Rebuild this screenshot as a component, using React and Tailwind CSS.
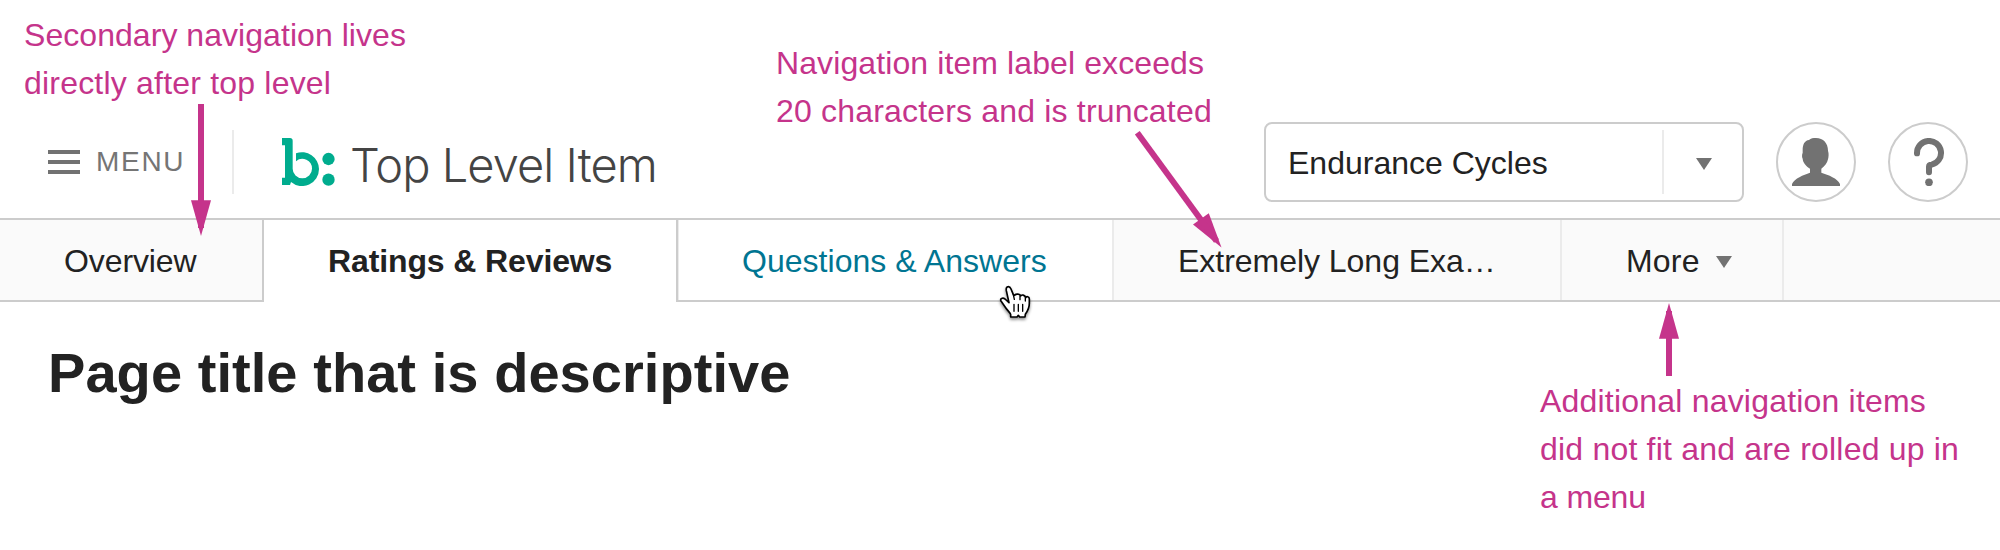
import React from "react";

function Caret() {
  return (
    <svg width="16" height="12" viewBox="0 0 16 12" className="block shrink-0 fill-[#727272]">
      <path d="M0 0H16L8 12Z" />
    </svg>
  );
}

function Logo() {
  return (
    <svg width="54" height="48" viewBox="36 39 162 144" className="block shrink-0 fill-[#00ac8e]">
      <path d="M36 39H60Q68 39 68 47V131A29 29 0 0 0 126 131A29 29 0 0 0 78 109V85A51 51 0 0 1 147 132A51 51 0 0 1 63 171L60 180H36V158H45V61H36Z" />
      <circle cx="175.5" cy="102" r="18.5" />
      <circle cx="175.5" cy="164" r="18.5" />
    </svg>
  );
}

function Person() {
  return (
    <svg width="48" height="48" viewBox="96 84 144 144" className="block fill-[#727272]">
      <path d="M96 228V222C104 205 130 195 150 188V176C138 168 129 158 128 146C126 143 125 134 128 128V120C128 104 134 91 147 90C152 85 160 84 168 84C190 84 204 100 204 122C207 130 206 142 204 148C202 158 195 168 184 176V188C206 195 232 205 240 222V228Z" />
    </svg>
  );
}

function Question() {
  return (
    <svg width="48" height="48" viewBox="432 84 144 144" className="block">
      <path
        d="M471 130A36 36 0 1 1 515 164Q507 164 507 170V187"
        fill="none"
        stroke="#727272"
        strokeWidth="18"
        strokeLinecap="round"
      />
      <circle cx="507" cy="217" r="11.5" fill="#727272" />
    </svg>
  );
}

function Tab({ className, children }) {
  return <div className={`flex h-20 shrink-0 items-center pl-16 pt-0.5 ${className}`}>{children}</div>;
}

function Note({ className, children }) {
  return <div className={`absolute whitespace-nowrap text-[32px] leading-[48px] text-[#c5348b] ${className}`}>{children}</div>;
}

export default function App() {
  return (
    <div className="relative h-[550px] w-[2000px] overflow-hidden bg-white font-['Liberation_Sans',Arial,sans-serif] text-[32px] text-[#222]">
      <header className="flex h-[218px] items-start pl-12 pr-8 pt-[122px]">
        <div className="flex h-20 items-center">
          <div className="flex w-8 flex-col gap-1.5">
            <div className="h-1 bg-[#727272]" />
            <div className="h-1 bg-[#727272]" />
            <div className="h-1 bg-[#727272]" />
          </div>
          <div className="ml-4 w-[136px] text-[28px] leading-[80px] tracking-[1.7px] text-[#757575]">MENU</div>
          <div className="h-16 w-0.5 bg-[#ebebeb]" />
          <div className="ml-12 w-[68px]">
            <Logo />
          </div>
          <h1 className="whitespace-nowrap pt-1.5 font-[Inter,sans-serif] text-[47px] font-[270] leading-[76px] tracking-[-0.95px] text-[#444]">
            Top Level Item
          </h1>
        </div>
        <div className="ml-auto flex gap-8">
          <div className="flex h-20 w-[480px] items-center rounded-lg border-2 border-[#ccc]">
            <div className="w-[396px] pl-[22px] pt-0.5 leading-[76px]">Endurance Cycles</div>
            <div className="h-16 w-0.5 bg-[#ebebeb]" />
            <div className="flex flex-1 pl-8 pt-1">
              <Caret />
            </div>
          </div>
          <div className="flex size-20 items-center justify-center rounded-full border-2 border-[#ccc]">
            <Person />
          </div>
          <div className="flex size-20 items-center justify-center rounded-full border-2 border-[#ccc]">
            <Question />
          </div>
        </div>
      </header>

      <nav className="flex h-[84px] border-t-2 border-[#ccc]">
        <Tab className="box-content! h-[78px]! w-[198px] border-b-2 border-r-2 border-[#ccc] bg-[#fafafa] tracking-[-0.1px]">Overview</Tab>
        <Tab className="w-[412px] font-bold tracking-[-0.12px]">Ratings &amp; Reviews</Tab>
        <div className="flex h-[82px] w-[438px] border-b-2 border-l-2 border-[#ccc]">
          <div className="w-px bg-[#ebebeb]" />
          <Tab className="-ml-px w-[436px] border-r-2 border-[#ebebeb] tracking-[0.03px] text-[#007592]">Questions &amp; Answers</Tab>
        </div>
        <div className="flex h-[82px] flex-1 border-b-2 border-[#ccc] bg-[#fafafa]">
          <Tab className="w-[448px] border-r-2 border-[#ebebeb] tracking-[-0.03px]">Extremely Long Exa…</Tab>
          <Tab className="w-[222px] border-r-2 border-[#ebebeb] tracking-[0.2px]">
            <span className="w-[90px]">More</span>
            <div className="pt-0.5">
              <Caret />
            </div>
          </Tab>
        </div>
      </nav>

      <main className="px-12 pt-[38px]">
        <h2 className="text-[56px] font-bold leading-[66px] tracking-[0.06px]">Page title that is descriptive</h2>
      </main>

      <Note className="left-6 top-[11px]">
        <div className="tracking-[0.05px]">Secondary navigation lives</div>
        <div className="tracking-[0.2px]">directly after top level</div>
      </Note>
      <Note className="left-[776px] top-[39px]">
        <div className="tracking-[0.1px]">Navigation item label exceeds</div>
        <div className="tracking-[0.18px]">20 characters and is truncated</div>
      </Note>
      <Note className="left-[1540px] top-[377px]">
        <div className="tracking-[0.2px]">Additional navigation items</div>
        <div className="tracking-[0.2px]">did not fit and are rolled up in</div>
        <div className="tracking-[-0.15px]">a menu</div>
      </Note>

      <svg width="2000" height="550" viewBox="0 0 2000 550" className="pointer-events-none absolute left-0 top-0">
        <g fill="#c5348b">
          <path d="M198 104H204V228H198Z" />
          <path d="M191 200.300H211L201 236Z" />
          <path d="M1666 311H1672V376H1666Z" />
          <path d="M1659 338.700H1679L1669 303Z" />
          <path d="M1193 224.500L1208.800 213.200L1221.500 247.500Z" />
        </g>
        <path d="M1137.300 132.700L1216.500 241" stroke="#c5348b" strokeWidth="6" />
      </svg>

      <svg
        width="34"
        height="38"
        viewBox="55 42 102 114"
        className="absolute left-[998px] top-[284px] drop-shadow-[0_2px_1.5px_rgba(0,0,0,0.45)]"
        fill="white"
        stroke="black"
        strokeWidth="5"
        strokeLinecap="round"
        strokeLinejoin="round"
      >
        <path d="M86 50C80 50 79 56 80 62L88 98L76 87C69 82 60 86 64 93L78 113C84 122 92 128 93 134V141H112L116 136L120 141H136L137 133C145 122 149 112 149 100V87C149 79 140 78 138 83C136 74 125 73 123 78C121 71 109 71 105 76L101 74L94 57C92 52 90 50 86 50Z" />
        <path d="M101 74L104 88M121 78V89M137 83V93M103 103V124M116 103V124M129 103V124" fill="none" strokeWidth="4" />
      </svg>
    </div>
  );
}
